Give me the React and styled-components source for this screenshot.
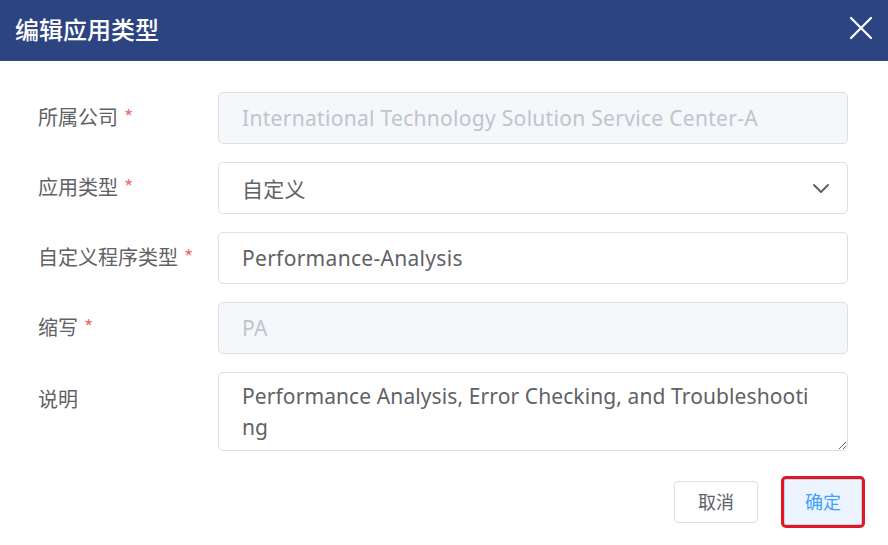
import React from "react";
import styled, { createGlobalStyle } from "styled-components";

const Global = createGlobalStyle`
  html, body { margin: 0; padding: 0; background: #fff; }
  body { font-family: "Noto Sans", "Noto Sans CJK SC", sans-serif; }
  * { box-sizing: border-box; }
`;

const Dialog = styled.div`
  width: 888px;
  height: 545px;
  background: #fff;
  display: flex;
  flex-direction: column;
`;

const Header = styled.div`
  height: 61px;
  background: #2c4482;
  display: flex;
  align-items: center;
  justify-content: space-between;
  padding: 0 14px 0 15px;
`;

const Title = styled.h1`
  margin: 0;
  color: #fff;
  font-family: "Noto Sans CJK SC", sans-serif;
  font-size: 24px;
  font-weight: 500;
  padding-bottom: 4px;
`;

const CloseBtn = styled.button`
  border: 0;
  background: transparent;
  padding: 0;
  width: 26px;
  height: 26px;
  display: flex;
  align-items: center;
  justify-content: center;
  margin-bottom: 6px;
  cursor: pointer;
`;

const Body = styled.div`
  display: flex;
  flex-direction: column;
  gap: 18px;
  padding: 31px 40px 0 38px;
`;

const Row = styled.div`
  display: grid;
  grid-template-columns: 180px 1fr;
  align-items: ${(p) => (p.$top ? "start" : "center")};
`;

const Label = styled.label`
  font-family: "Noto Sans CJK SC", sans-serif;
  font-size: 20px;
  color: #606266;
  padding-top: ${(p) => (p.$top ? "12px" : "0")};
  padding-bottom: 3px;
`;

const Star = styled.span`
  color: #f56c6c;
  margin-left: 6px;
  font-size: 20px;
`;

const Field = styled.div`
  position: relative;
  height: 52px;
  border: 1px solid #dcdfe6;
  border-radius: 5px;
  background: ${(p) => (p.$disabled ? "#f5f7fa" : "#fff")};
  display: flex;
  align-items: center;
  padding: 0 23px;
`;

const Input = styled.input`
  border: 0;
  outline: none;
  background: transparent;
  width: 100%;
  padding: 0 0 1px;
  font-family: "Noto Sans", "Noto Sans CJK SC", sans-serif;
  font-size: 21px;
  letter-spacing: 0.3px;
  color: ${(p) => (p.disabled ? "#c0c4cc" : "#606266")};
  -webkit-text-fill-color: ${(p) => (p.disabled ? "#c0c4cc" : "#606266")};
`;

const Chevron = styled.svg`
  position: absolute;
  right: 17px;
  top: 50%;
  transform: translateY(-50%);
`;

const TextArea = styled.textarea`
  display: block;
  width: 100%;
  height: 79px;
  border: 1px solid #dcdfe6;
  border-radius: 5px;
  padding: 8px 32px 8px 23px;
  font-family: "Noto Sans", "Noto Sans CJK SC", sans-serif;
  font-size: 21px;
  letter-spacing: 0.1px;
  line-height: 31px;
  color: #606266;
  resize: vertical;
  outline: none;
  overflow: hidden;
  word-break: break-all;
`;

const Footer = styled.div`
  display: flex;
  justify-content: flex-end;
  align-items: center;
  gap: 26px;
  padding: 28px 26px 0 0;
`;

const Button = styled.button`
  width: ${(p) => (p.$primary ? "78px" : "84px")};
  height: ${(p) => (p.$primary ? "46px" : "42px")};
  border-radius: ${(p) => (p.$primary ? "2px" : "4px")};
  border: 1px solid ${(p) => (p.$primary ? "#b3d8ff" : "#dcdfe6")};
  background: ${(p) => (p.$primary ? "#ecf5ff" : "#fff")};
  color: ${(p) => (p.$primary ? "#409eff" : "#606266")};
  font-family: "Noto Sans CJK SC", sans-serif;
  font-size: 18px;
  padding: 0 0 2px;
  cursor: pointer;
  outline: ${(p) => (p.$primary ? "3px solid #e5161f" : "none")};
  outline-offset: 0;
`;

export default function App() {
  return (
    <>
      <Global />
      <Dialog>
        <Header>
          <Title>编辑应用类型</Title>
          <CloseBtn aria-label="close">
            <svg width="24" height="24" viewBox="0 0 24 24">
              <path d="M2 2 L22 22 M22 2 L2 22" stroke="#fff" strokeWidth="2.2" strokeLinecap="round" />
            </svg>
          </CloseBtn>
        </Header>
        <Body>
          <Row>
            <Label>所属公司<Star>*</Star></Label>
            <Field $disabled>
              <Input disabled defaultValue="International Technology Solution Service Center-A" />
            </Field>
          </Row>
          <Row>
            <Label>应用类型<Star>*</Star></Label>
            <Field>
              <Input readOnly defaultValue="自定义" />
              <Chevron width="18" height="18" viewBox="0 0 18 18">
                <path d="M2 6 L9 13 L16 6" fill="none" stroke="#606266" strokeWidth="2" strokeLinecap="round" strokeLinejoin="round" />
              </Chevron>
            </Field>
          </Row>
          <Row>
            <Label>自定义程序类型<Star>*</Star></Label>
            <Field>
              <Input defaultValue="Performance-Analysis" />
            </Field>
          </Row>
          <Row>
            <Label>缩写<Star>*</Star></Label>
            <Field $disabled>
              <Input disabled defaultValue="PA" />
            </Field>
          </Row>
          <Row $top>
            <Label $top>说明</Label>
            <TextArea defaultValue="Performance Analysis, Error Checking, and Troubleshooting" />
          </Row>
        </Body>
        <Footer>
          <Button>取消</Button>
          <Button $primary>确定</Button>
        </Footer>
      </Dialog>
    </>
  );
}
